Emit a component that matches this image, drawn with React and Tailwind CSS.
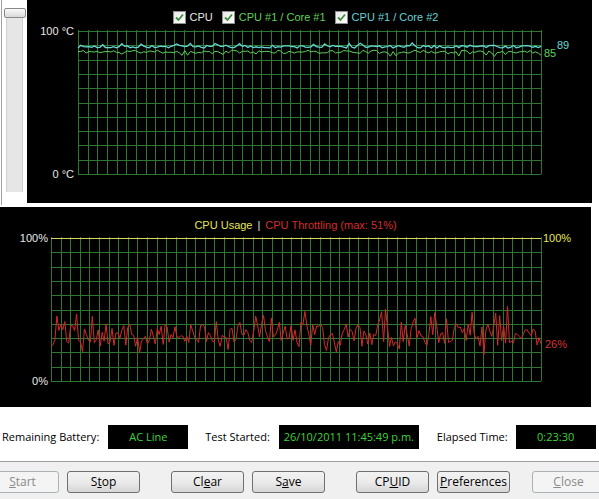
import React from 'react'

// seeded random so the traces look the same every run
function rng(seed){
  let a = seed
  return function(){
    a |= 0; a = a + 0x6D2B79F5 | 0
    let t = Math.imul(a ^ a >>> 15, 1 | a)
    t = t + Math.imul(t ^ t >>> 7, 61 | t) ^ t
    return ((t ^ t >>> 14) >>> 0) / 4294967296
  }
}

function makeTrace(seed, n, fn){
  const r = rng(seed)
  const out = []
  for(let i=0;i<n;i++) out.push(fn(r, i))
  return out
}

const cyan = makeTrace(7, 170, (r)=> 89 + (r()-0.5)*2 + (r()>0.93 ? 1.8 : 0))
const green = makeTrace(11, 170, (r)=> 85.5 + (r()-0.5)*2.2 - (r()>0.9 ? 2.2 : 0))
const red = makeTrace(23, 250, (r, i)=>{
  if(i===0) return 24
  if(i===249) return 26
  let v = 32 + (r()-0.5)*16
  if(r()>0.85) v += 5 + r()*10
  if(r()>0.88) v -= 6
  return v
})

function toPoints(vals, x0, x1, yOf){
  const step = (x1-x0)/(vals.length-1)
  return vals.map((v,i)=> `${(x0+i*step).toFixed(1)},${yOf(v).toFixed(1)}`).join(' ')
}

function Grid({ x0, x1, cols, rows, y0, y1 }){
  const lines = []
  const dx = (x1-x0)/cols
  const dy = (y1-y0)/rows
  for(let i=0;i<=cols;i++){
    const x = Math.round(x0+i*dx)+0.5
    lines.push(<line key={'v'+i} x1={x} y1={y0-1} x2={x} y2={y1} stroke="#2e772e" strokeWidth="1" />)
  }
  for(let j=0;j<=rows;j++){
    const y = Math.round(y0+j*dy)+0.5
    lines.push(<line key={'h'+j} x1={x0} y1={y} x2={x1} y2={y} stroke="#2e772e" strokeWidth="1" />)
  }
  return <g>{lines}</g>
}

function Check({ color, label }){
  return (
    <div className="flex items-center gap-[4px]">
      <div className="w-[13px] h-[13px] border border-[#8e8f8f] bg-gradient-to-br from-[#e8e8e8] to-[#ffffff] flex items-center justify-center">
        <svg width="9" height="9" viewBox="0 0 9 9">
          <path d="M1 4.5 L3.5 7 L8 1.5" fill="none" stroke="#3f8f3f" strokeWidth="1.8" />
        </svg>
      </div>
      <span className={color}>{label}</span>
    </div>
  )
}

function Btn({ children, disabled, className }){
  return (
    <button className={`h-[22px] w-[73px] shrink-0 rounded-[3px] border text-[12px] leading-none ${disabled ? 'border-[#adb2b5] bg-[#f4f4f4] text-[#8a8a8a]' : 'border-[#707070] bg-gradient-to-b from-[#f2f2f2] via-[#ebebeb] to-[#d6d6d6] text-black'} ${className || ''}`}>
      {children}
    </button>
  )
}

function InfoBox({ children, w }){
  return (
    <div className={`${w} h-[24px] shrink-0 bg-black text-[#3ad43a] flex items-center justify-center whitespace-nowrap`}>{children}</div>
  )
}

export default function App(){
  const chartFont = { fontFamily: '"Liberation Sans", Arial, sans-serif' }
  return (
    <div className="w-[599px] h-[499px] bg-white flex flex-col overflow-hidden font-['Open_Sans',sans-serif] text-[12px]">
      {/* temperature panel */}
      <div className="flex h-[207px] shrink-0">
        <div className="w-[26px] h-[205px] border-l border-[#a0a0a0] ml-[1px] flex flex-col items-center pt-[8px]">
          <div className="w-[22px] h-[10px] rounded-[2px] border border-[#8a8a8a] bg-gradient-to-b from-[#fbfbfb] to-[#d9d9d9] z-10"></div>
          <div className="w-[17px] h-[175px] bg-[#e6e6e6] border-x border-[#d0d0d0] -mt-[1px]"></div>
        </div>
        <div className="w-[565px] h-[203px] bg-black flex flex-col text-[11px]" style={chartFont}>
          <div className="h-[30px] shrink-0 flex items-start justify-center gap-[9px] pt-[9px] pr-[8px]">
            <Check color="text-[#e8e8e8]" label="CPU" />
            <Check color="text-[#5fd05f]" label="CPU #1 / Core #1" />
            <Check color="text-[#63d3d3]" label="CPU #1 / Core #2" />
          </div>
          <svg width="565" height="173" className="overflow-visible">
            <Grid x0={51} x1={514} cols={48} rows={10} y0={1} y1={144} />
            <polyline points={toPoints(green, 51, 514, v=> 144 - v*1.43)} fill="none" stroke="#5fd35f" strokeWidth="1" />
            <polyline points={toPoints(cyan, 51, 514, v=> 144 - v*1.43)} fill="none" stroke="#66d8d8" strokeWidth="1.3" />
            <text x="47" y="5" textAnchor="end" fill="#e8e8e8" fontSize="11">100 °C</text>
            <text x="47" y="148" textAnchor="end" fill="#e8e8e8" fontSize="11">0 °C</text>
            <text x="517" y="27" fill="#5fd35f" fontSize="11">85</text>
            <text x="530" y="19" fill="#66d8d8" fontSize="11">89</text>
          </svg>
        </div>
      </div>

      {/* usage / throttling panel */}
      <div className="w-[591px] h-[200px] bg-black flex flex-col shrink-0 text-[11px]" style={chartFont}>
        <div className="h-[30px] shrink-0 flex items-start justify-center pt-[10px] gap-[5px]">
          <span className="text-[#e6e65a]">CPU Usage</span>
          <span className="text-[#e8e8e8]">|</span>
          <span className="text-[#d42c2c]">CPU Throttling (max: 51%)</span>
        </div>
        <svg width="591" height="170" className="overflow-visible">
          <Grid x0={51} x1={541} cols={51} rows={10} y0={1} y1={144} />
          <line x1="51" y1="1.5" x2="541" y2="1.5" stroke="#d8d860" strokeWidth="1" />
          <polyline points={toPoints(red, 51, 541, v=> 144 - v*1.43)} fill="none" stroke="#d42a2a" strokeWidth="1" />
          <text x="48" y="5" textAnchor="end" fill="#e8e8e8" fontSize="11">100%</text>
          <text x="48" y="148" textAnchor="end" fill="#e8e8e8" fontSize="11">0%</text>
          <text x="543" y="5" fill="#e6e65a" fontSize="11">100%</text>
          <text x="545" y="111" fill="#d83030" fontSize="11">26%</text>
        </svg>
      </div>

      {/* info row */}
      <div className="h-[54px] shrink-0 flex items-center pt-[6px] whitespace-nowrap text-[11px]">
        <span className="ml-[2px] shrink-0">Remaining Battery:</span>
        <div className="ml-[9px]"><InfoBox w="w-[80px]">AC Line</InfoBox></div>
        <span className="ml-[17px] shrink-0">Test Started:</span>
        <div className="ml-[9px]"><InfoBox w="w-[140px]">26/10/2011 11:45:49 p.m.</InfoBox></div>
        <span className="ml-[18px] shrink-0">Elapsed Time:</span>
        <div className="ml-[8px]"><InfoBox w="w-[80px]">0:23:30</InfoBox></div>
      </div>

      {/* buttons */}
      <div className="flex-1 bg-[#f0f0f0] border-t border-[#a0a0a0] flex items-start pt-[9px]">
        <Btn disabled className="-ml-[14px]"><span className="underline">S</span>tart</Btn>
        <Btn className="ml-[8px]">S<span className="underline">t</span>op</Btn>
        <Btn className="ml-[31px]">Cl<span className="underline">e</span>ar</Btn>
        <Btn className="ml-[8px]">S<span className="underline">a</span>ve</Btn>
        <Btn className="ml-[31px]">CP<span className="underline">U</span>ID</Btn>
        <Btn className="ml-[8px]"><span className="underline">P</span>references</Btn>
        <Btn disabled className="ml-[22px]"><span className="underline">C</span>lose</Btn>
      </div>
    </div>
  )
}
